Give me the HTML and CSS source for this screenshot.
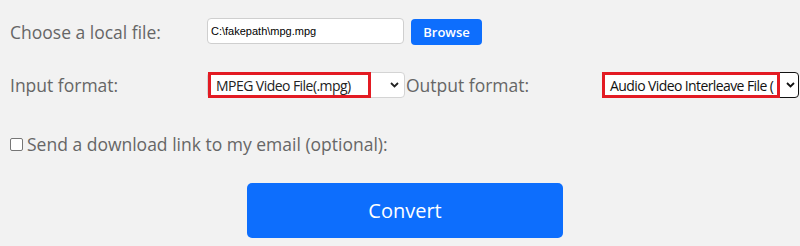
FILE: index.html
```html
<!DOCTYPE html>
<html>
<head>
<meta charset="utf-8">
<link rel="stylesheet" href="styles.css">
</head>
<body>
<div class="form">
  <div class="row row-file">
    <span class="label">Choose a local file:</span>
    <span class="file-input">C:\fakepath\mpg.mpg</span>
    <span class="btn-browse">Browse</span>
  </div>
  <div class="row row-format">
    <span class="label label-in">Input format:</span>
    <span class="select select-in">
      <span class="mark mark-in">MPEG Video File(.mpg)</span>
      <svg class="chev" width="9" height="6" viewBox="0 0 9 6"><path d="M1 1 L4.5 4.5 L8 1" fill="none" stroke="#222" stroke-width="1.8"/></svg>
    </span>
    <span class="label label-out">Output format:</span>
    <span class="select select-out">
      <span class="mark mark-out">Audio Video Interleave File (</span>
      <svg class="chev" width="9" height="6" viewBox="0 0 9 6"><path d="M1 1 L4.5 4.5 L8 1" fill="none" stroke="#111" stroke-width="1.8"/></svg>
    </span>
  </div>
  <div class="row row-email">
    <span class="check"></span>
    <span class="email-text">Send a download link to my email (optional):</span>
  </div>
  <div class="row row-convert">
    <span class="btn-convert">Convert</span>
  </div>
</div>
</body>
</html>
```
FILE: styles.css
```css
html, body {
  margin: 0;
  padding: 0;
  background: #f2f2f2;
}
body {
  font-family: "Open Sans", "DejaVu Sans", sans-serif;
  color: #666;
  width: 800px;
  height: 246px;
  overflow: hidden;
}
.form {
  padding: 18px 0 0 10px;
}
.row {
  display: flex;
  align-items: center;
}
.label {
  font-size: 17.5px;
  flex: none;
}
.row-file {
  height: 27px;
}
.row-file .label {
  width: 197px;
}
.file-input {
  box-sizing: border-box;
  width: 197px;
  height: 26px;
  background: #fff;
  border: 1px solid #cfcfcf;
  border-radius: 4px;
  font-family: "Liberation Sans", Arial, sans-serif;
  font-size: 11px;
  color: #000;
  padding-left: 3px;
  display: flex;
  align-items: center;
  align-self: flex-start;
}
.btn-browse {
  box-sizing: border-box;
  margin-left: 7px;
  width: 71px;
  height: 26px;
  background: #0d6efd;
  color: #fff;
  border-radius: 4px;
  font-size: 13px;
  font-weight: 600;
  display: flex;
  align-items: center;
  justify-content: center;
  align-self: flex-end;
}
.row-format {
  margin-top: 27px;
  height: 26px;
}
.label-in {
  width: 197px;
}
.label-out {
  width: 196px;
  margin-left: 1px;
}
.select {
  box-sizing: border-box;
  height: 26px;
  background: #fff;
  border: 1px solid #d4d4d4;
  border-radius: 4px;
  display: flex;
  align-items: center;
  position: relative;
  flex: none;
}
.select-in {
  width: 198px;
}
.select-out {
  width: 197px;
  border: 1.5px solid #111;
  border-radius: 4px;
}
.mark {
  box-sizing: border-box;
  height: 26px;
  border: 3px solid #e31b23;
  background: #fff;
  color: #222;
  display: flex;
  align-items: center;
  white-space: nowrap;
  overflow: hidden;
  align-self: stretch;
  margin-top: -1px;
  margin-bottom: -1px;
}
.mark-in {
  width: 163px;
  font-size: 14px;
  letter-spacing: -0.55px;
  padding-left: 5px;
}
.mark-out {
  width: 178px;
  margin-left: -1px;
  font-size: 14px;
  letter-spacing: -0.6px;
  padding-left: 5px;
  color: #111;
}
.chev {
  position: absolute;
  right: 5px;
  top: 9px;
}
.select-out .chev {
  right: 3px;
}
.row-email {
  margin-top: 34px;
  height: 24px;
}
.check {
  box-sizing: border-box;
  width: 13px;
  height: 13px;
  border: 1px solid #767676;
  border-radius: 2px;
  background: #fff;
  margin-right: 4px;
  flex: none;
}
.email-text {
  font-size: 17.5px;
}
.row-convert {
  margin-top: 27px;
  padding-left: 237px;
}
.btn-convert {
  width: 316px;
  height: 55px;
  background: #0d6efd;
  color: #fff;
  border-radius: 5px;
  font-size: 20px;
  display: flex;
  align-items: center;
  justify-content: center;
}
```
